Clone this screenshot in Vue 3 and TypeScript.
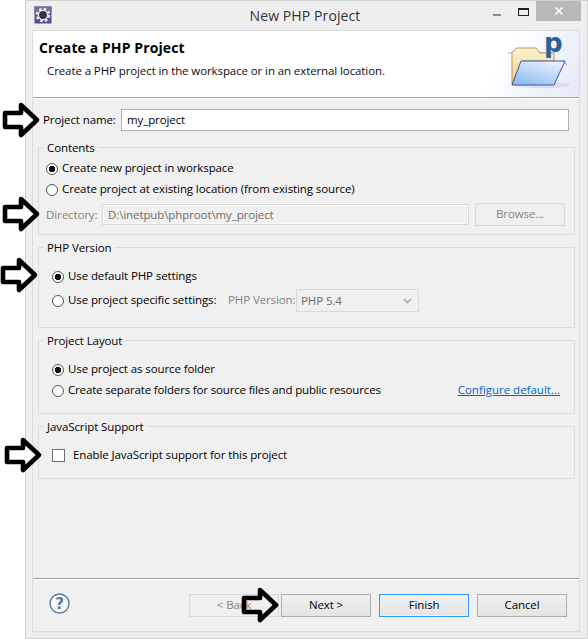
<template>
  <div class="window">
    <div class="titlebar">
      <svg class="app-icon" width="18" height="18" viewBox="0 0 18 18">
        <rect x="0.5" y="0.5" width="17" height="17" fill="#5d4b8c" />
        <rect x="0.5" y="0.5" width="17" height="6" fill="#7a68a6" />
        <circle cx="9" cy="9" r="6" fill="none" stroke="#ececec" stroke-width="2.6" stroke-dasharray="2.6 2.1" />
        <circle cx="9" cy="9" r="4.6" fill="#33333f" stroke="#e8e8e8" stroke-width="1.4" />
      </svg>
      <span class="title">New PHP Project</span>
      <div class="controls">
        <span class="min"></span>
        <span class="max"></span>
        <span class="close">
          <svg width="10" height="10" viewBox="0 0 10 10">
            <path d="M1.5 1.5 L8.5 8.5 M8.5 1.5 L1.5 8.5" stroke="#fff" stroke-width="1.6" />
          </svg>
        </span>
      </div>
    </div>

    <div class="client">
      <header class="banner">
        <div>
          <h1>Create a PHP Project</h1>
          <p>Create a PHP project in the workspace or in an external location.</p>
        </div>
        <svg class="wizard-icon" width="62" height="56" viewBox="0 0 62 56">
          <defs>
            <linearGradient id="back" x1="0" y1="0" x2="0" y2="1">
              <stop offset="0" stop-color="#fff3cf" />
              <stop offset="1" stop-color="#eccf8c" />
            </linearGradient>
            <linearGradient id="front" x1="0.8" y1="0" x2="0.2" y2="1">
              <stop offset="0" stop-color="#eaf3fd" />
              <stop offset="1" stop-color="#8dbcf0" />
            </linearGradient>
          </defs>
          <ellipse cx="34" cy="50" rx="28" ry="3" fill="#c9cce0" opacity="0.55" />
          <path d="M0 18 H47 M55 25 L59 30" stroke="#a8a8b0" stroke-width="1.2" fill="none" />
          <path d="M4 49 V17 L9 13 H28 L32 18 H46 V26 H14 Z" fill="url(#back)" stroke="#b69a55" />
          <text x="36" y="17" class="p-mark">p</text>
          <path d="M4 50 L13 26 H57 L46 50 Z" fill="url(#front)" stroke="#3d55b0" />
        </svg>
      </header>

      <main class="main">
        <div class="name-row">
          <label class="name-label">Project name:</label>
          <input class="field name-field" value="my_project" />
        </div>

        <section class="group contents">
          <span class="legend">Contents</span>
          <label class="row"><input type="radio" name="loc" checked /><span>Create new project in workspace</span></label>
          <label class="row"><input type="radio" name="loc" /><span>Create project at existing location (from existing source)</span></label>
          <div class="dir-row">
            <span class="dim dir-label">Directory:</span>
            <input class="field dir-field" value="D:\inetpub\phproot\my_project" disabled />
            <button class="btn off browse" disabled>Browse...</button>
          </div>
        </section>

        <section class="group version">
          <span class="legend">PHP Version</span>
          <label class="row tall"><input type="radio" name="ver" checked /><span>Use default PHP settings</span></label>
          <div class="row tall spec">
            <label class="spec-label"><input type="radio" name="ver" /><span>Use project specific settings:</span></label>
            <span class="dim ver-label">PHP Version:</span>
            <div class="select">
              <span>PHP 5.4</span>
              <svg width="9" height="6" viewBox="0 0 9 6"><path d="M1 1 L4.5 4.5 L8 1" fill="none" stroke="#a8a8a8" stroke-width="1.6" /></svg>
            </div>
          </div>
        </section>

        <section class="group layout">
          <span class="legend">Project Layout</span>
          <label class="row"><input type="radio" name="lay" checked /><span>Use project as source folder</span></label>
          <div class="row split">
            <label class="spec-label"><input type="radio" name="lay" /><span class="tight">Create separate folders for source files and public resources</span></label>
            <a class="link" href="#">Configure default...</a>
          </div>
        </section>

        <section class="group js">
          <span class="legend">JavaScript Support</span>
          <label class="check"><input type="checkbox" /><span>Enable JavaScript support for this project</span></label>
        </section>
      </main>

      <footer class="footer">
        <svg class="help" width="21" height="21" viewBox="0 0 21 21">
          <circle cx="10.5" cy="10.5" r="9.5" fill="#f7f8fa" stroke="#5f7896" stroke-width="1.4" />
          <text x="10.5" y="15.5" class="help-mark">?</text>
        </svg>
        <div class="buttons">
          <button class="btn off" disabled>&lt; Back</button>
          <button class="btn next">Next &gt;</button>
          <button class="btn primary">Finish</button>
          <button class="btn">Cancel</button>
        </div>
      </footer>
    </div>

    <svg
      v-for="a in arrows"
      :key="a.x + '-' + a.y"
      class="arrow"
      :style="{ left: a.x + 'px', top: a.y + 'px' }"
      width="38"
      height="36"
      viewBox="0 0 38 36"
    >
      <path d="M3 11 H19 V3 L35 18 L19 33 V25 H3 Z" :fill="a.fill" stroke="#000" stroke-width="4.6" stroke-linejoin="round" />
    </svg>
  </div>
</template>

<script setup lang="ts">
// offsets from the window's inner corner (26, 1); the last arrow lets the button show through
const arrows = [
  { x: -24, y: 101, fill: '#fff' },
  { x: -24, y: 195, fill: '#fff' },
  { x: -26, y: 256, fill: '#fff' },
  { x: -22, y: 436, fill: '#fff' },
  { x: 215, y: 586, fill: 'none' },
]
</script>

<style>
html,
body {
  margin: 0;
  background: #fff;
  overflow: hidden;
}
</style>

<style scoped>
.window {
  position: relative;
  box-sizing: border-box;
  width: 563px;
  height: 639px;
  margin-left: 25px;
  display: flex;
  flex-direction: column;
  background: #eeeeee;
  border: 1px solid #d2d2d2;
  font-family: "Open Sans", "Noto Sans", sans-serif;
  font-size: 11.5px;
  letter-spacing: -0.1px;
  color: #000;
}

.titlebar {
  position: relative;
  height: 29px;
  flex: none;
}

.app-icon {
  position: absolute;
  left: 8px;
  top: 5px;
}

.title {
  display: block;
  text-align: center;
  font-size: 14px;
  letter-spacing: 0.1px;
  line-height: 29px;
  color: #333;
  margin-left: -3px;
}

.controls {
  position: absolute;
  top: 0;
  right: 6px;
  display: flex;
  align-items: flex-start;
}

.min {
  width: 8px;
  height: 2px;
  margin-top: 13px;
  background: #8a8a8a;
}

.max {
  box-sizing: border-box;
  width: 11px;
  height: 8px;
  margin: 7px 7px 0 17px;
  border: 1px solid #222;
  border-top-width: 2px;
}

.close {
  width: 45px;
  height: 20px;
  background: #b9b9b9;
  display: flex;
  align-items: center;
  justify-content: center;
}

.client {
  flex: 1;
  display: flex;
  flex-direction: column;
  margin: 0 7px 6px 6px;
  border: 1px solid #dcdcdc;
  background: #f0f0f0;
  min-height: 0;
}

.banner {
  flex: none;
  position: relative;
  height: 66px;
  background: linear-gradient(118deg, #fff 83%, #e4e9f7 100%);
  border-bottom: 1px solid #a0a0a0;
}

.banner h1 {
  margin: 0;
  padding: 8px 0 0 6px;
  font-size: 14px;
  font-weight: 700;
  letter-spacing: 0.1px;
  line-height: 17px;
  color: #000;
}

.banner p {
  margin: 7px 0 0 14px;
  line-height: 16px;
  color: #0b0b20;
}

.wizard-icon {
  position: absolute;
  right: 9px;
  top: 4px;
  overflow: visible;
}

.p-mark {
  font-family: "DejaVu Sans", sans-serif;
  font-weight: 700;
  font-size: 26px;
  fill: #2b6198;
}

.help-mark {
  font-family: "DejaVu Sans", sans-serif;
  font-weight: 700;
  font-size: 15px;
  text-anchor: middle;
  fill: #5f7896;
}

.main {
  flex: 1;
  border-top: 1px solid #fff;
  padding: 10px 4px 0 5px;
}

.name-row {
  display: flex;
  align-items: center;
  padding-left: 5px;
  margin-bottom: 16px;
}

.name-label {
  width: 78px;
  flex: none;
  margin-top: -2px;
}

.field {
  box-sizing: border-box;
  margin: 0;
  padding: 0 5px;
  font: inherit;
  letter-spacing: inherit;
  outline: none;
}

.name-field {
  width: 448px;
  height: 22px;
  padding-bottom: 2px;
  border: 1px solid #abadb3;
  background: #fff;
  color: #000;
}

.group {
  position: relative;
  border: 1px solid #dcdcdc;
  margin-bottom: 12px;
  padding-left: 7px;
  padding-right: 8px;
}

.legend {
  position: absolute;
  left: 5px;
  top: -8px;
  padding: 0 3px;
  line-height: 16px;
  background: #f0f0f0;
}

.row {
  display: flex;
  align-items: center;
  height: 21px;
  gap: 4px;
}

.row span,
.check span {
  margin-bottom: 2px;
}

.row .select span {
  margin-bottom: 0;
}

.spec-label {
  display: flex;
  align-items: center;
  gap: 4px;
}

.tight {
  letter-spacing: -0.16px;
}

input[type="radio"] {
  appearance: none;
  box-sizing: border-box;
  width: 12px;
  height: 12px;
  margin: 0;
  flex: none;
  border: 1px solid #555;
  border-radius: 50%;
  background: #fff;
}

input[type="radio"]:checked {
  background: radial-gradient(circle, #111 0 3px, #fff 3.5px);
}

.contents {
  padding-top: 10px;
  padding-bottom: 8px;
}

.dim {
  color: #838383;
}

.dir-row {
  display: flex;
  align-items: center;
  margin-top: 3px;
}

.dir-label {
  width: 56px;
  flex: none;
}

.dir-field {
  width: 367px;
  height: 21px;
  margin-right: 6px;
  border: 1px solid #d9d9d9;
  box-shadow: inset 0 0 0 1px #fafafa;
  background: #f0f0f0;
  color: #6d6d6d;
  -webkit-text-fill-color: #6d6d6d;
}

.browse {
  width: 91px;
}

.version {
  padding: 17px 0 15px 13px;
}

.row.tall {
  height: 23px;
  gap: 4px;
}

.row.tall.spec {
  margin-top: 1px;
  gap: 0;
}

.spec .spec-label {
  width: 176px;
  flex: none;
}

.ver-label {
  width: 68px;
  flex: none;
  white-space: nowrap;
}

.select {
  box-sizing: border-box;
  width: 123px;
  height: 23px;
  flex: none;
  display: flex;
  align-items: center;
  justify-content: space-between;
  padding: 0 6px 0 4px;
  border: 1px solid #d9d9d9;
  color: #6d6d6d;
}

.layout {
  padding: 18px 14px 12px 13px;
}

.split {
  justify-content: space-between;
}

.link {
  color: #0066cc;
  text-decoration: underline;
  letter-spacing: 0;
  margin-bottom: 2px;
}

.js {
  padding: 22px 13px 16px 13px;
}

.check {
  display: flex;
  align-items: center;
  height: 13px;
  gap: 8px;
}

input[type="checkbox"] {
  appearance: none;
  box-sizing: border-box;
  width: 13px;
  height: 13px;
  margin: 0;
  border: 1px solid #6f6f6f;
  background: #fff;
}

.footer {
  flex: none;
  display: flex;
  align-items: flex-start;
  border-top: 1px solid #a0a0a0;
  box-shadow: inset 0 1px 0 #fff;
  padding: 15px 12px 14px 16px;
}

.help {
  margin-top: -1px;
}

.buttons {
  margin-left: auto;
  display: flex;
  gap: 8px;
}

.btn {
  box-sizing: border-box;
  width: 90px;
  height: 23px;
  padding: 0 0 2px;
  font: inherit;
  letter-spacing: inherit;
  color: #000;
  border: 1px solid #acacac;
  background: linear-gradient(#f0f0f0, #e5e5e5);
}

.btn.off {
  color: #838383;
  border-color: #d9d9d9;
  background: #efefef;
}

.btn.next {
  margin-left: -6px;
}

.btn.primary {
  border-color: #3399ff;
  box-shadow: inset 0 0 0 1px #e8f2fc;
}

.arrow {
  position: absolute;
  overflow: visible;
}
</style>
